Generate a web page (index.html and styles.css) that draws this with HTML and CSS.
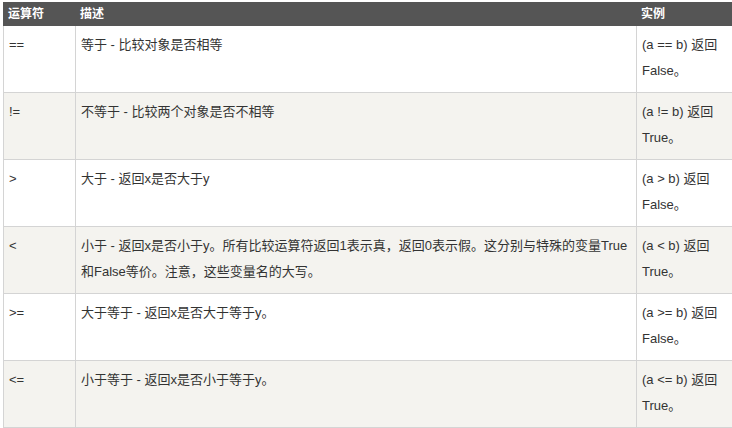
FILE: index.html
```html
<!DOCTYPE html>
<html lang="zh">
<head>
<meta charset="utf-8">
<link rel="stylesheet" href="styles.css">
</head>
<body>
<table class="reference">
  <colgroup>
    <col class="c1">
    <col class="c2">
    <col class="c3">
  </colgroup>
  <tr>
    <th>运算符</th>
    <th>描述</th>
    <th>实例</th>
  </tr>
  <tr>
    <td>==</td>
    <td>等于 - 比较对象是否相等</td>
    <td>(a == b) 返回 False。</td>
  </tr>
  <tr>
    <td>!=</td>
    <td>不等于 - 比较两个对象是否不相等</td>
    <td>(a != b) 返回 True。</td>
  </tr>
  <tr>
    <td>&gt;</td>
    <td>大于 - 返回x是否大于y</td>
    <td>(a &gt; b) 返回 False。</td>
  </tr>
  <tr>
    <td>&lt;</td>
    <td>小于 - 返回x是否小于y。所有比较运算符返回1表示真，返回0表示假。这分别与特殊的变量True和False等价。注意，这些变量名的大写。</td>
    <td>(a &lt; b) 返回 True。</td>
  </tr>
  <tr>
    <td>&gt;=</td>
    <td>大于等于 - 返回x是否大于等于y。</td>
    <td>(a &gt;= b) 返回 False。</td>
  </tr>
  <tr>
    <td>&lt;=</td>
    <td>小于等于 - 返回x是否小于等于y。</td>
    <td>(a &lt;= b) 返回 True。</td>
  </tr>
</table>
</body>
</html>
```
FILE: styles.css
```css
html, body {
  margin: 0;
  padding: 0;
  background: #fff;
}
body {
  font-family: "Liberation Sans", "Noto Sans CJK SC", sans-serif;
  color: #333;
  overflow: hidden;
}
.reference {
  border-collapse: collapse;
  table-layout: fixed;
  width: 760px;
  margin: 2px 0 0 3px;
}
.c1 { width: 72px; }
.c2 { width: 561px; }
.c3 { width: 127px; }
.reference th {
  background-color: #555;
  color: #fff;
  border: 1px solid #555;
  font-size: 12px;
  line-height: 18px;
  font-weight: bold;
  padding: 2px 4px 2px;
  text-align: left;
  vertical-align: top;
}
.reference td {
  border: 1px solid #d4d4d4;
  font-size: 13px;
  line-height: 26px;
  padding: 6px 5px 8px;
  vertical-align: top;
  height: 52px;
  box-sizing: content-box;
}
.reference td:nth-child(3) {
  padding-right: 40px;
}
.reference tr:nth-child(odd) td {
  background-color: #f4f3ef;
}
.reference tr:nth-child(even) td {
  background-color: #fff;
}
```
